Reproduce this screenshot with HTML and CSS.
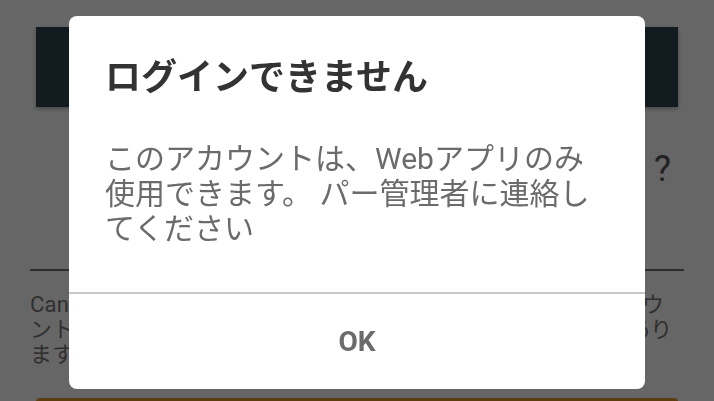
FILE: index.html
```html
<!DOCTYPE html>
<html lang="ja">
<head>
  <meta charset="UTF-8" />
  <meta name="viewport" content="width=device-width, initial-scale=1.0"/>
  <title>ログインできません</title>
  <link rel="stylesheet" href="styles.css">
</head>
<body>
  <div class="page">
    <div class="page-header"></div>
    <h2 class="page-title">どのアカウントを使いますか ?</h2>
    <hr class="page-rule" />
    <p class="page-text">
      Canvas アプリにログインできない場合は学校の管理者にアカウ<br>
      ントの種類を確認してください。ほかのアプリを使う必要があり<br>
      ます。
    </p>
    <div class="page-button"></div>
  </div>

  <div class="overlay">
    <div class="dialog" role="alertdialog">
      <h1 class="dialog-title">ログインできません</h1>
      <p class="dialog-message">このアカウントは、Webアプリのみ使用できます。 パー管理者に連絡してください</p>
      <div class="dialog-actions">
        <button type="button" class="dialog-button">OK</button>
      </div>
    </div>
  </div>
</body>
</html>
```

FILE: styles.css
```css
* {
  box-sizing: border-box;
}

body {
  margin: 0;
  background: #fff;
  font-family: Roboto, "Noto Sans CJK JP", sans-serif;
  overflow: hidden;
}

.page {
  padding: 27px 30px 0;
}

.page-header {
  height: 80px;
  margin: 0 6px;
  background: #2d4452;
  box-shadow: 0 2px 4px rgba(0,0,0,0.3);
}

.page-title {
  margin: 42px 13px 0 0;
  text-align: right;
  font-size: 36px;
  line-height: 40px;
  font-weight: normal;
  color: #555;
}

.page-rule {
  margin: 80px 0 0;
  border: none;
  border-top: 2px solid #6e6e6e;
}

.page-text {
  margin: 21px 0 0;
  font-size: 22px;
  line-height: 25px;
  letter-spacing: 0.2px;
  color: #777;
  white-space: nowrap;
}

.page-button {
  height: 50px;
  margin: 31px 6px 0;
  border-radius: 4px;
  background: #e59a2f;
}

.overlay {
  position: fixed;
  inset: 0;
  background: rgba(0,0,0,0.6);
  display: flex;
  justify-content: center;
  align-items: flex-start;
}

.dialog {
  width: 576px;
  margin-top: 16px;
  background: #fff;
  border-radius: 8px;
  overflow: hidden;
}

.dialog-title {
  margin: 0;
  padding: 36px 36px 0;
  font-family: "Noto Sans CJK JP", sans-serif;
  font-size: 36px;
  line-height: 44px;
  font-weight: bold;
  color: #333;
}

.dialog-message {
  margin: 45px 0 0;
  padding: 0 36px;
  height: 151px;
  font-size: 30px;
  line-height: 35px;
  color: #6b6b6b;
}

.dialog-actions {
  border-top: 2px solid #c8c8c8;
  display: flex;
  justify-content: center;
}

.dialog-button {
  width: 100%;
  height: 95px;
  border: none;
  background: none;
  font-family: Roboto, sans-serif;
  font-size: 28px;
  font-weight: bold;
  color: #6b6b6b;
  cursor: pointer;
}
```
